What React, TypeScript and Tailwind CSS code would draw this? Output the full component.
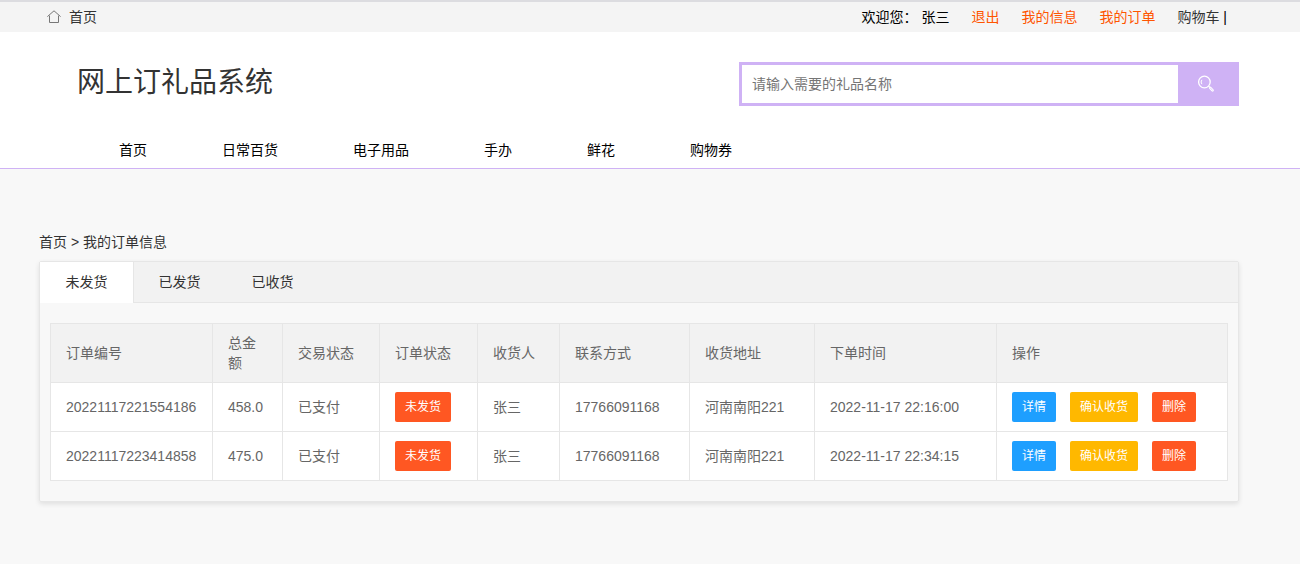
import { useState } from "react";
import clsx from "clsx";

type Order = {
  id: string;
  total: string;
  payStatus: string;
  status: string;
  receiver: string;
  phone: string;
  address: string;
  createdAt: string;
};

const categories = ["首页", "日常百货", "电子用品", "手办", "鲜花", "购物券"];

const tabs = ["未发货", "已发货", "已收货"];

const columns = [
  { title: "订单编号", width: "w-[162px]" },
  { title: "总金额", width: "w-[70px]" },
  { title: "交易状态", width: "w-[97px]" },
  { title: "订单状态", width: "w-[98px]" },
  { title: "收货人", width: "w-[82px]" },
  { title: "联系方式", width: "w-[130px]" },
  { title: "收货地址", width: "w-[125px]" },
  { title: "下单时间", width: "w-[182px]" },
  { title: "操作", width: "w-[231px]" },
];

const orders: Order[] = [
  {
    id: "20221117221554186",
    total: "458.0",
    payStatus: "已支付",
    status: "未发货",
    receiver: "张三",
    phone: "17766091168",
    address: "河南南阳221",
    createdAt: "2022-11-17 22:16:00",
  },
  {
    id: "20221117223414858",
    total: "475.0",
    payStatus: "已支付",
    status: "未发货",
    receiver: "张三",
    phone: "17766091168",
    address: "河南南阳221",
    createdAt: "2022-11-17 22:34:15",
  },
];

const HomeIcon = () => (
  <svg width="14" height="14" viewBox="0 0 14 14" fill="none" stroke="#777" aria-hidden="true">
    <path d="M0.4 6.6 7 0.8l6.6 5.8" />
    <path d="M2.5 5.6v6.9h9V5.6" />
  </svg>
);

const SearchIcon = () => (
  <svg width="18" height="18" viewBox="0 0 18 18" fill="none" stroke="#fff" aria-hidden="true">
    <circle cx="6.4" cy="7" r="5.8" strokeWidth="1.3" />
    <path d="M3.9 9.2a3.6 3.6 0 0 1 0-4.4" strokeWidth="1" />
    <path d="m10.6 11.2 1.2 1.2" strokeWidth="1.2" />
    <path d="m12.2 12.8 2.4 2.6" strokeWidth="2.6" strokeLinecap="round" />
    <path d="m12.4 13 2 2.2" stroke="#cfb2f5" strokeWidth="0.6" strokeLinecap="round" />
  </svg>
);

const TopBar = () => (
  <div className="border-t-2 border-[#dcdce0] bg-[#f4f4f4]">
    <div className="flex h-[30px] items-center justify-between pl-[47px] pr-[73px]">
      <a href="#" className="flex items-center gap-2 text-[#333]">
        <HomeIcon />
        首页
      </a>
      <div className="flex items-center gap-[22px]">
        <span>欢迎您： 张三</span>
        <a href="#" className="text-[#ff5500]">
          退出
        </a>
        <a href="#" className="text-[#ff5500]">
          我的信息
        </a>
        <a href="#" className="text-[#ff5500]">
          我的订单
        </a>
        <span>
          <a href="#" className="text-[#333]">
            购物车
          </a>{" "}
          |
        </span>
      </div>
    </div>
  </div>
);

const Header = () => (
  <header className="border-b border-[#cfb2f5] bg-white pt-[30px] pb-2">
    <div className="flex items-start justify-between pl-[77px] pr-[61px]">
      <h1 className="text-[28px] leading-[42px] text-[#333]">网上订礼品系统</h1>
      <form
        className="flex h-11 w-[500px] border-3 border-[#cfb2f5] bg-white"
        onSubmit={(e) => e.preventDefault()}
      >
        <input
          type="text"
          aria-label="礼品名称"
          placeholder="请输入需要的礼品名称"
          className="min-w-0 flex-1 px-2.5 outline-none placeholder:text-[#757575]"
        />
        <button
          type="submit"
          aria-label="搜索"
          className="flex w-[58px] items-center justify-center bg-[#cfb2f5]"
        >
          <SearchIcon />
        </button>
      </form>
    </div>
    <nav className="mt-[34px] flex gap-[75px] pl-[119px]">
      {categories.map((name) => (
        <a key={name} href="#">
          {name}
        </a>
      ))}
    </nav>
  </header>
);

const OrderTable = () => (
  <table className="w-full table-fixed border-collapse text-left text-[#666]">
    <thead className="bg-[#f2f2f2]">
      <tr>
        {columns.map(({ title, width }) => (
          <th
            key={title}
            scope="col"
            className={clsx("border border-[#e6e6e6] px-[15px] py-[9px] font-normal", width)}
          >
            {title}
          </th>
        ))}
      </tr>
    </thead>
    <tbody>
      {orders.map((order) => (
        <tr key={order.id} className="bg-white">
          <td className="border border-[#e6e6e6] px-[15px]">{order.id}</td>
          <td className="border border-[#e6e6e6] px-[15px]">{order.total}</td>
          <td className="border border-[#e6e6e6] px-[15px]">{order.payStatus}</td>
          <td className="border border-[#e6e6e6] px-[15px] py-[9px]">
            <button className="block h-[30px] rounded-xs bg-[#ff5722] px-2.5 text-xs text-white">
              {order.status}
            </button>
          </td>
          <td className="border border-[#e6e6e6] px-[15px]">{order.receiver}</td>
          <td className="border border-[#e6e6e6] px-[15px]">{order.phone}</td>
          <td className="border border-[#e6e6e6] px-[15px]">{order.address}</td>
          <td className="border border-[#e6e6e6] px-[15px]">{order.createdAt}</td>
          <td className="border border-[#e6e6e6] px-[15px] py-[9px]">
            <div className="flex gap-3.5 text-xs text-white">
              <button className="h-[30px] rounded-xs bg-[#1e9fff] px-2.5">详情</button>
              <button className="h-[30px] rounded-xs bg-[#ffb800] px-2.5">确认收货</button>
              <button className="h-[30px] rounded-xs bg-[#ff5722] px-2.5">删除</button>
            </div>
          </td>
        </tr>
      ))}
    </tbody>
  </table>
);

const App = () => {
  const [active, setActive] = useState(tabs[0]);

  return (
    <div
      lang="zh-CN"
      className="min-h-screen bg-[#f8f8f8] font-['Liberation_Sans','Noto_Sans_CJK_SC',sans-serif] text-sm leading-5 text-black"
    >
      <TopBar />
      <Header />
      <main className="pt-[63px] pr-[61px] pb-[62px] pl-[39px]">
        <div className="text-[#333]">
          <a href="#">首页</a> &gt; <a href="#">我的订单信息</a>
        </div>
        <section className="mt-[9px] rounded-xs border border-[#e6e6e6] shadow-[0_2px_5px_0_rgba(0,0,0,0.1)]">
          <div role="tablist" className="flex h-[41px] bg-[#f2f2f2]">
            {tabs.map((tab) => (
              <button
                key={tab}
                role="tab"
                aria-selected={tab === active}
                onClick={() => setActive(tab)}
                className={clsx(
                  "w-[93px] border-b text-[#333]",
                  tab === active
                    ? "border-white bg-white shadow-[1px_0_0_#e6e6e6]"
                    : "border-[#e6e6e6]"
                )}
              >
                {tab}
              </button>
            ))}
            <div className="flex-1 border-b border-[#e6e6e6]" />
          </div>
          <div className="px-2.5 py-5">
            <OrderTable />
          </div>
        </section>
      </main>
    </div>
  );
};

export default App;
